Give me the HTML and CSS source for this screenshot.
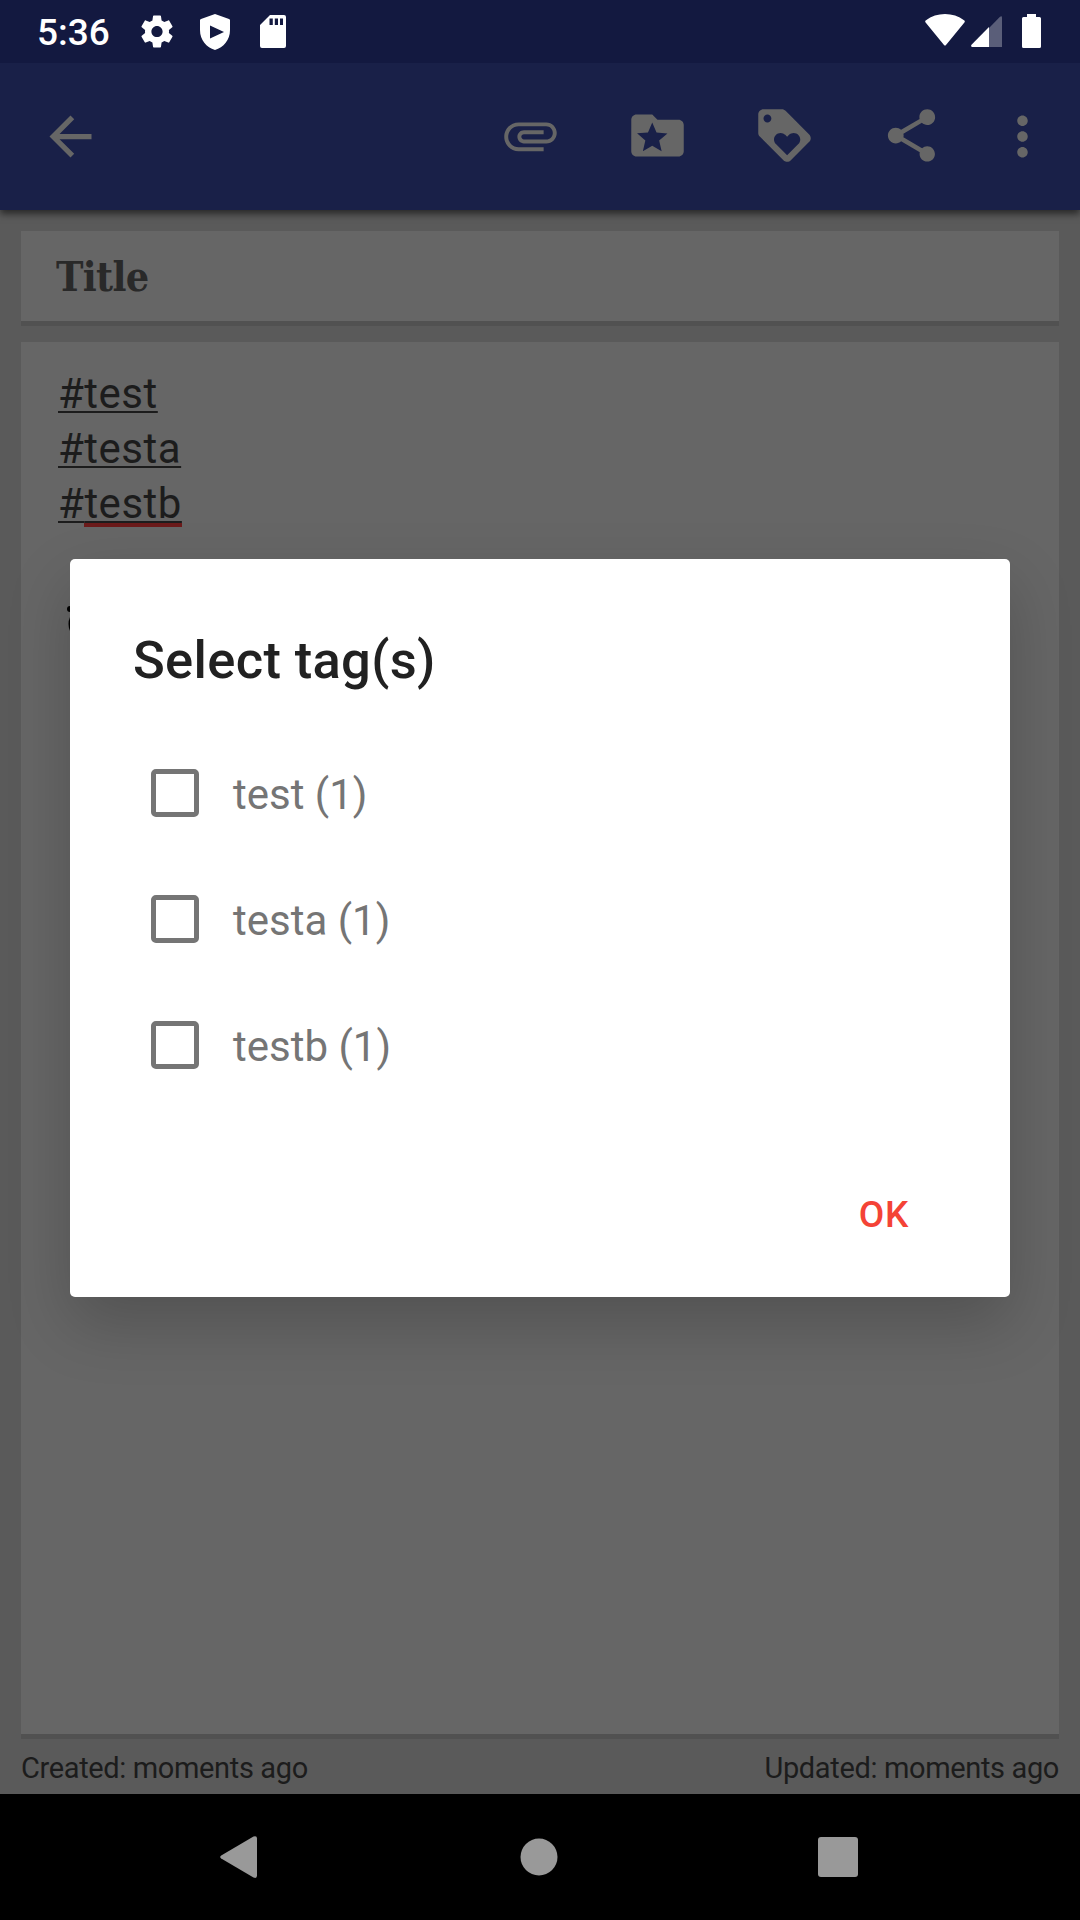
FILE: index.html
```html
<!DOCTYPE html>
<html lang="en">
<head>
<meta charset="utf-8">
<title>Note editor</title>
<link rel="stylesheet" href="styles.css">
</head>
<body>
<div class="screen">
  <header class="status">
    <span class="clock">5:36</span>
    <svg class="st-gear" viewBox="2 2 20 20"><path fill-rule="evenodd" d="M19.43 12.98c.04-.32.07-.64.07-.98s-.03-.66-.07-.98l2.11-1.65c.19-.15.24-.42.12-.64l-2-3.46c-.12-.22-.39-.3-.61-.22l-2.49 1c-.52-.4-1.08-.73-1.69-.98l-.38-2.65C14.46 2.18 14.25 2 14 2h-4c-.25 0-.46.18-.49.42l-.38 2.65c-.61.25-1.17.59-1.69.98l-2.49-1c-.23-.09-.49 0-.61.22l-2 3.46c-.13.22-.07.49.12.64l2.11 1.65c-.04.32-.07.65-.07.98s.03.66.07.98l-2.11 1.65c-.19.15-.24.42-.12.64l2 3.460c.12.22.39.3.61.22l2.49-1c.52.4 1.08.73 1.69.98l.38 2.65c.03.24.24.42.49.42h4c.25 0 .46-.18.49-.42l.38-2.65c.61-.25 1.17-.59 1.69-.98l2.49 1c.23.09.49 0 .61-.22l2-3.46c.12-.22.07-.49-.12-.64l-2.11-1.65zM12 15.5c-1.93 0-3.5-1.57-3.5-3.5s1.57-3.5 3.5-3.5 3.5 1.57 3.5 3.5-1.57 3.5-3.5 3.5z"/></svg>
    <svg class="st-shield" viewBox="0 0 30 36"><path fill-rule="evenodd" d="M15 0L29 5Q30 5.400 30 6.500V16C30 26 23.500 33.500 15 36C6.500 33.500 0 26 0 16V6.500Q0 5.400 1 5ZM10 11.500V24.500L24 18Z"/></svg>
    <svg class="st-sd" viewBox="0 0 26 33"><path fill-rule="evenodd" d="M10 0H24Q26 0 26 2V31Q26 33 24 33H2Q0 33 0 31V10ZM9.500 3.500V10H12.800V3.500ZM14.800 3.500V10H18V3.500ZM20 3.500V10H23V3.500Z"/></svg>
    <span class="spacer"></span>
    <svg class="st-wifi" viewBox="0 0 40 32"><path d="M.6 8.500Q-.4 7.300 1 6.300C11.500-2 28.500-2 39 6.300Q40.400 7.300 39.400 8.500L21 31Q20 32.200 19 31Z"/></svg>
    <svg class="st-cell" viewBox="0 0 31 31"><path opacity=".3" d="M18 12L29 .7Q31-.6 31 1.500V31H18Z"/><path d="M18 11V31H1Q-.6 30.500.5 28.800Z"/></svg>
    <svg class="st-battery" viewBox="0 0 19 34"><path d="M5 0H14V3H17.500Q19 3 19 4.500V32.500Q19 34 17.500 34H1.500Q0 34 0 32.500V4.500Q0 3 1.500 3H5Z"/></svg>
  </header>

  <nav class="toolbar">
    <svg class="icon" viewBox="0 0 24 24"><path d="M20 11H7.830l5.590-5.590L12 4l-8 8 8 8 1.410-1.410L7.830 13H20v-2z"/></svg>
    <div class="actions">
      <svg class="icon" viewBox="0 0 24 24"><path d="M2 12.500C2 9.460 4.460 7 7.500 7H18c2.210 0 4 1.790 4 4s-1.790 4-4 4H9.500C8.120 15 7 13.880 7 12.500S8.120 10 9.500 10H17v1.500H9.500c-.55 0-1 .45-1 1s.45 1 1 1H18c1.380 0 2.500-1.120 2.500-2.500S19.380 8.500 18 8.500H7.500c-2.210 0-4 1.790-4 4s1.790 4 4 4H17V18H7.500C4.460 18 2 15.540 2 12.500z"/></svg>
      <svg class="icon" viewBox="0 0 24 24"><path d="M20 6h-8l-2-2H4c-1.100 0-1.990.9-1.990 2L2 18c0 1.100.9 2 2 2h16c1.100 0 2-.9 2-2V8c0-1.100-.9-2-2-2zm-6.420 12L10 15.900 6.420 18l.95-4.070-3.160-2.740 4.160-.36L10 7l1.630 3.840 4.160.36-3.160 2.740.95 4.060z"/></svg>
      <svg class="icon" viewBox="0 0 24 24"><path d="M21.410 11.580l-9-9C12.050 2.220 11.550 2 11 2H4c-1.100 0-2 .9-2 2v7c0 .55.220 1.050.590 1.420l9 9c.36.36.86.58 1.410.58.55 0 1.050-.22 1.410-.59l7-7c.37-.36.59-.86.59-1.410 0-.55-.23-1.060-.59-1.420zM5.500 7C4.670 7 4 6.330 4 5.500S4.670 4 5.500 4 7 4.670 7 5.500 6.330 7 5.500 7zm11.770 8.270L13 19.540l-4.270-4.270C8.280 14.810 8 14.190 8 13.500c0-1.380 1.120-2.500 2.500-2.500.69 0 1.320.28 1.770.74l.73.72.73-.73c.45-.45 1.080-.73 1.770-.73 1.380 0 2.500 1.120 2.500 2.500 0 .69-.28 1.320-.73 1.770z"/></svg>
      <svg class="icon" viewBox="0 0 24 24"><path d="M18 16.080c-.76 0-1.440.3-1.960.77L8.910 12.700c.05-.23.09-.46.09-.7s-.04-.47-.09-.7l7.050-4.110c.54.5 1.250.81 2.040.81 1.660 0 3-1.340 3-3s-1.340-3-3-3-3 1.340-3 3c0 .24.040.47.090.7L8.040 9.810C7.500 9.310 6.790 9 6 9c-1.660 0-3 1.340-3 3s1.340 3 3 3c.79 0 1.500-.31 2.040-.81l7.120 4.160c-.05.21-.08.43-.08.65 0 1.610 1.310 2.920 2.920 2.920 1.610 0 2.920-1.310 2.920-2.920s-1.310-2.920-2.920-2.920z"/></svg>
    </div>
    <svg class="icon more" viewBox="0 0 24 24"><path d="M12 8c1.100 0 2-.9 2-2s-.9-2-2-2-2 .9-2 2 .9 2 2 2zm0 2c-1.100 0-2 .9-2 2s.9 2 2 2 2-.9 2-2-.9-2-2-2zm0 6c-1.100 0-2 .9-2 2s.9 2 2 2 2-.9 2-2-.9-2-2-2z"/></svg>
  </nav>

  <main class="note">
    <h1 class="card note-title"><span>Title</span></h1>
    <div class="card note-body">
      <p><u>#test</u></p>
      <p><u>#testa</u></p>
      <p><u>#<span class="misspelled">testb</span></u></p>
    </div>
    <footer class="meta"><span>Created: moments ago</span><span>Updated: moments ago</span></footer>
  </main>

  <nav class="sysnav">
    <svg viewBox="0 0 38 42"><path d="M1.200 19.400L33.500.5Q37-.7 37 2.500V39.500Q37 43 33.500 41.500L1.200 22.600Q-.8 21 1.200 19.400Z"/></svg>
    <svg viewBox="0 0 38 42"><circle cx="19" cy="21" r="18.500"/></svg>
    <svg viewBox="0 0 40 40"><rect width="40" height="40" rx="3"/></svg>
  </nav>

  <svg class="glyph-edge" viewBox="0 0 8 28"><circle cx="4" cy="4" r="3"/><path d="M4 12Q1 19 4 26Z"/></svg>
  <section class="dialog">
    <h2>Select tag(s)</h2>
    <ul>
      <li><i class="box"></i><span>test (1)</span></li>
      <li><i class="box"></i><span>testa (1)</span></li>
      <li><i class="box"></i><span>testb (1)</span></li>
    </ul>
    <div class="buttons"><button>OK</button></div>
  </section>
</div>
</body>
</html>
```
FILE: styles.css
```css
* { box-sizing: border-box; margin: 0; padding: 0; }
body { width: 1080px; height: 1920px; overflow: hidden; font-family: Roboto, sans-serif; background: #5a5a5a; }
svg { display: block; flex: none; }
.screen { position: relative; display: flex; flex-direction: column; width: 1080px; height: 1920px; }

.status { display: flex; align-items: center; height: 63px; padding: 0 39px 0 37px; background: #131940; }
.status svg { fill: #fff; }
.clock { width: 104px; font-size: 37px; font-weight: 500; line-height: 64px; color: #fff; padding-top: 3px; }
.spacer { flex: 1; }
.st-gear { width: 32px; height: 33px; }
.st-shield { width: 30px; height: 36px; margin-left: 27px; }
.st-sd { width: 26px; height: 33px; margin-left: 30px; }
.st-wifi { width: 40px; height: 32px; margin-bottom: 3px; }
.st-cell { width: 31px; height: 31px; margin-left: 6px; }
.st-battery { width: 19px; height: 34px; margin-left: 20px; margin-bottom: 1px; }

.toolbar { position: relative; display: flex; align-items: center; height: 147px; padding: 0 26px 1px 39px; background: #192048; box-shadow: 0 4px 7px rgba(0, 0, 0, .55); clip-path: inset(0 0 -20px 0); }
.icon { width: 63px; height: 63px; fill: #666; }
.actions { display: flex; gap: 64px; margin: 0 0 1px auto; }
.more { margin-left: 48px; }

.note { display: flex; flex-direction: column; height: 1584px; padding: 21px 21px 0; }
.card { background: #666; box-shadow: 0 5px #515151; }
.note-title { height: 90px; padding-left: 35px; font: bold 41px/92px "DejaVu Serif Condensed", "DejaVu Serif", serif; letter-spacing: -.7px; color: #292929; }
.note-body { flex: 1; margin-top: 21px; padding: 24px 37px; font-size: 42px; line-height: 55px; letter-spacing: .5px; color: #1c1c1c; }
.note-body u { text-decoration: underline; text-decoration-thickness: 2px; text-underline-offset: 3px; text-decoration-skip-ink: none; }
.misspelled { background: linear-gradient(#6b1a1a, #6b1a1a) 0 calc(100% - 1px) / 100% 4px no-repeat; }
.meta { display: flex; justify-content: space-between; height: 60px; font-size: 29px; letter-spacing: -.36px; line-height: 68px; color: #1c1c1c; }

.sysnav { display: flex; align-items: center; height: 126px; padding: 0 222px 1px 219px; justify-content: space-between; background: #000; }
.sysnav svg { width: 40px; height: 42px; fill: #999; }

.glyph-edge { position: absolute; left: 66px; top: 605px; width: 8px; height: 28px; fill: #000; }
.dialog { position: absolute; left: 70px; top: 559px; width: 940px; height: 738px; padding: 69px 63px 0; border-radius: 5px; background: #fff; box-shadow: 0 26px 64px rgba(0, 0, 0, .2); }
.dialog h2 { font-size: 52.500px; font-weight: 500; line-height: 64px; letter-spacing: .33px; color: #212121; }
.dialog ul { list-style: none; margin-top: 38px; }
.dialog li { display: flex; align-items: center; height: 126px; padding-left: 18px; gap: 34px; font-size: 42px; color: #757575; }
.dialog li span { padding-top: 3px; }
.box { width: 48px; height: 48px; border: 5.500px solid #757575; border-radius: 5px; }
.buttons { display: flex; justify-content: flex-end; margin-top: 82px; padding-right: 38px; }
.buttons button { border: 0; background: none; font: 500 37px/50px Roboto, sans-serif; letter-spacing: .7px; color: #f44336; }
```
